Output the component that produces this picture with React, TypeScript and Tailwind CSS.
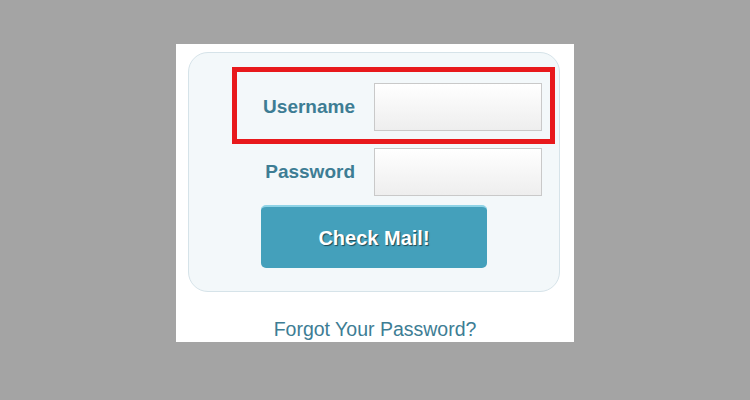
const Field = ({ label }: { label: string }) => (
  <div className="flex items-center gap-[19px]">
    <label className="w-[166px] text-right text-[19px] font-bold text-[#3d7d94]">{label}</label>
    <input
      type={label === 'Password' ? 'password' : 'text'}
      className="w-[168px] h-[48px] border border-[#c9c9c9] bg-gradient-to-b from-white to-[#eeeeee] outline-none"
    />
  </div>
);

export default function App() {
  return (
    <div className="w-[750px] h-[400px] bg-[#a4a4a4] pt-[44px] flex justify-center font-['Liberation_Sans',Arial,sans-serif]">
      <div className="w-[398px] h-[298px] bg-white pt-[8px] pl-[12px]">
        <div className="relative w-[372px] h-[240px] rounded-[20px] border border-[#d6e3e9] bg-[#f3f8fa] pt-[30px]">
          {/* highlight around the username row */}
          <div className="absolute left-[43px] top-[14px] w-[323px] h-[77px] border-[5px] border-[#e8191c]" />

          <div className="flex flex-col gap-[17px]">
            <Field label="Username" />
            <Field label="Password" />
          </div>

          <button
            type="button"
            className="mt-[9px] ml-[72px] w-[226px] h-[63px] rounded-[5px] border-t-2 border-[#8fd3e6] bg-[#44a0bb] text-[20px] font-bold text-white [text-shadow:1px_1px_1px_rgba(0,0,0,0.55)]"
          >
            Check Mail!
          </button>
        </div>

        <div className="mt-[23px] pr-[12px] text-center text-[19.5px] text-[#3d7d94]">Forgot Your Password?</div>
      </div>
    </div>
  );
}
